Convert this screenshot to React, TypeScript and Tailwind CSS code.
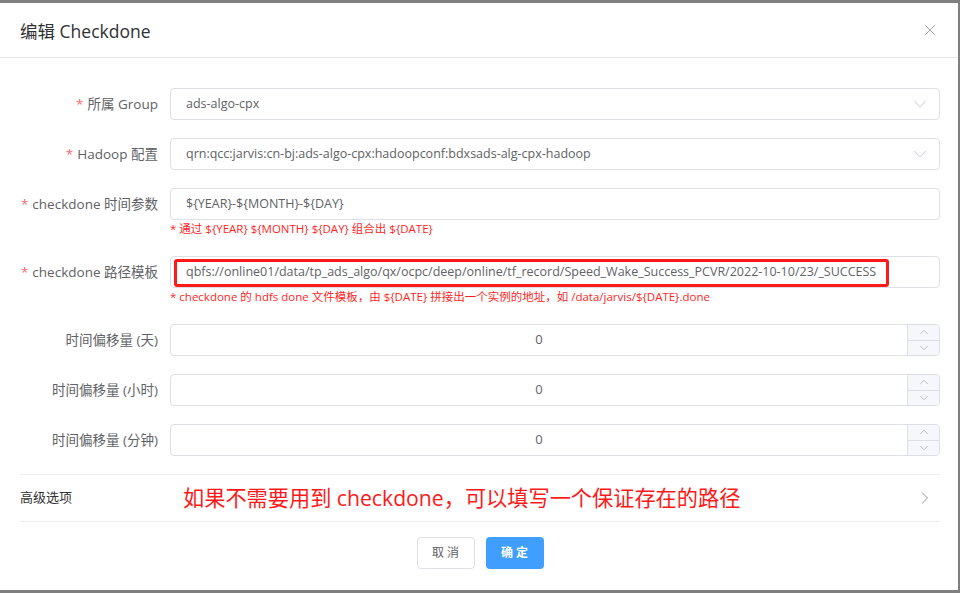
import React from "react";
import { ChevronDown, ChevronUp, ChevronRight, X } from "lucide-react";

const font = "font-['Open_Sans','Noto_Sans_CJK_SC',sans-serif]";

function Label({ text, required }: { text: string; required?: boolean }) {
  return (
    <div className="w-[150px] shrink-0 pr-3 h-8 flex items-center justify-end text-[13.5px] text-[#606266] whitespace-nowrap">
      {required && <span className="text-[#f56c6c] mr-1">*</span>}
      {text}
    </div>
  );
}

function SelectBox({ value }: { value: string }) {
  return (
    <div className="flex-1 h-8 border border-[#dcdfe6] rounded flex items-center pl-[15px] pr-[8px] text-[12.5px] text-[#606266]">
      <span className="flex-1 truncate">{value}</span>
      <ChevronDown size={22} strokeWidth={1} className="text-[#c0c4cc]" />
    </div>
  );
}

function NumberBox() {
  return (
    <div className="flex-1 h-8 border border-[#dcdfe6] rounded flex overflow-hidden">
      <div className="flex-1 flex items-center justify-center text-[13px] text-[#606266]">0</div>
      <div className="w-8 border-l border-[#dcdfe6] bg-[#f5f7fa] flex flex-col">
        <div className="flex-1 flex items-center justify-center border-b border-[#dcdfe6]">
          <ChevronUp size={14} strokeWidth={1.3} className="text-[#a8abb2]" />
        </div>
        <div className="flex-1 flex items-center justify-center">
          <ChevronDown size={14} strokeWidth={1.3} className="text-[#a8abb2]" />
        </div>
      </div>
    </div>
  );
}

export default function App() {
  return (
    <div className={`w-[960px] h-[593px] bg-[#7f7f7f] pt-[3px] ${font}`}>
      <div className="w-[958px] h-[587px] bg-white flex flex-col">
        {/* header */}
        <div className="h-[55px] border-b border-[#e4e7ed] flex items-center justify-between pl-5 pr-[19px]">
          <span className="text-[17.5px] text-[#303133] pt-[2px]">编辑 Checkdone</span>
          <X size={18} strokeWidth={1.1} className="text-[#909399]" />
        </div>

        {/* body */}
        <div className="pl-5 pr-[18px] pt-[30px]">
          <div className="flex mb-[18px]">
            <Label text="所属 Group" required />
            <SelectBox value="ads-algo-cpx" />
          </div>
          <div className="flex mb-[18px]">
            <Label text="Hadoop 配置" required />
            <SelectBox value="qrn:qcc:jarvis:cn-bj:ads-algo-cpx:hadoopconf:bdxsads-alg-cpx-hadoop" />
          </div>
          <div className="flex mb-[18px]">
            <Label text="checkdone 时间参数" required />
            <div className="flex-1">
              <div className="h-8 border border-[#dcdfe6] rounded flex items-center px-[15px] text-[12.5px] text-[#606266]">
                {"${YEAR}-${MONTH}-${DAY}"}
              </div>
              <div className="h-[18px] pt-[2px] text-[11.5px] leading-[14px] text-[#ff1f1f] whitespace-nowrap">
                {"* 通过 ${YEAR} ${MONTH} ${DAY} 组合出 ${DATE}"}
              </div>
            </div>
          </div>
          <div className="flex mb-[18px]">
            <Label text="checkdone 路径模板" required />
            <div className="flex-1">
              <div className="relative h-8 border border-[#dcdfe6] rounded flex items-center px-[15px] text-[12.5px] text-[#606266] whitespace-nowrap">
                {"qbfs://online01/data/tp_ads_algo/qx/ocpc/deep/online/tf_record/Speed_Wake_Success_PCVR/2022-10-10/23/_SUCCESS"}
                <div className="absolute left-[3px] top-[2px] w-[715px] h-[28px] border-[3px] border-[#ff1a1a] rounded-[3px]" />
              </div>
              <div className="h-[18px] pt-[2px] text-[11.5px] leading-[14px] text-[#ff1f1f] whitespace-nowrap">
                {"* checkdone 的 hdfs done 文件模板，由 ${DATE} 拼接出一个实例的地址，如 /data/jarvis/${DATE}.done"}
              </div>
            </div>
          </div>
          <div className="flex mb-[18px]">
            <Label text="时间偏移量 (天)" />
            <NumberBox />
          </div>
          <div className="flex mb-[18px]">
            <Label text="时间偏移量 (小时)" />
            <NumberBox />
          </div>
          <div className="flex mb-[18px]">
            <Label text="时间偏移量 (分钟)" />
            <NumberBox />
          </div>

          {/* advanced */}
          <div className="h-[48px] border-t border-b border-[#ebeef5] flex items-center">
            <span className="w-[163px] text-[13px] text-[#303133]">高级选项</span>
            <span className="flex-1 text-[21.2px] text-[#ff1a1a] whitespace-nowrap">
              如果不需要用到 checkdone，可以填写一个保证存在的路径
            </span>
            <ChevronRight size={20} strokeWidth={1.2} className="text-[#909399] mr-[5px]" />
          </div>
        </div>

        {/* footer */}
        <div className="flex justify-center gap-[11px] pt-[15px] pl-[2px]">
          <button className="w-[58px] h-8 border border-[#dcdfe6] rounded text-[12px] text-[#606266] bg-white">
            取 消
          </button>
          <button className="w-[58px] h-8 rounded text-[12px] text-white bg-[#409eff] font-semibold">
            确 定
          </button>
        </div>
      </div>
    </div>
  );
}
